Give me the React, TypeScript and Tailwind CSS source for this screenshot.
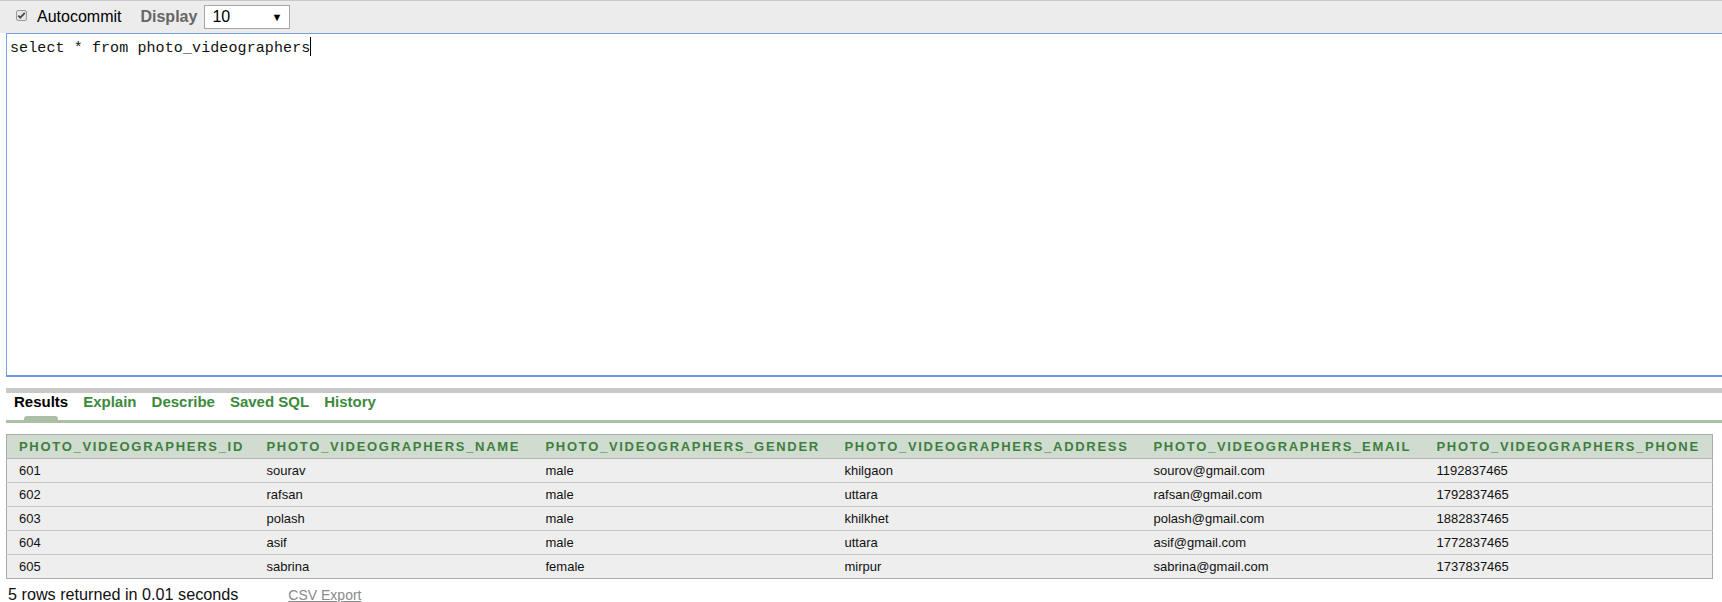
import React from "react";

const columns = [
    "PHOTO_VIDEOGRAPHERS_ID",
    "PHOTO_VIDEOGRAPHERS_NAME",
    "PHOTO_VIDEOGRAPHERS_GENDER",
    "PHOTO_VIDEOGRAPHERS_ADDRESS",
    "PHOTO_VIDEOGRAPHERS_EMAIL",
    "PHOTO_VIDEOGRAPHERS_PHONE",
];

const rows = [
    ["601", "sourav", "male", "khilgaon", "sourov@gmail.com", "1192837465"],
    ["602", "rafsan", "male", "uttara", "rafsan@gmail.com", "1792837465"],
    ["603", "polash", "male", "khilkhet", "polash@gmail.com", "1882837465"],
    ["604", "asif", "male", "uttara", "asif@gmail.com", "1772837465"],
    ["605", "sabrina", "female", "mirpur", "sabrina@gmail.com", "1737837465"],
];

const tabs = ["Results", "Explain", "Describe", "Saved SQL", "History"];

function App() {
    return (
        <div className="w-[1722px] h-[602px] overflow-hidden bg-white font-['Liberation_Sans',Arial,sans-serif] text-black">
            {/* Toolbar */}
            <div className="h-[33px] border-t border-[#c8c8c8] bg-[#ececec] flex items-center pl-[16px]">
                <svg width="11" height="11" viewBox="0 0 11 11" className="mb-[3px]">
                    <rect x="0.5" y="0.5" width="10" height="10" rx="1.5" fill="#e6e6e6" stroke="#9a9a9a" />
                    <path d="M2.3 5.6 L4.3 7.7 L8.8 2.8" fill="none" stroke="#4a4a4a" strokeWidth="1.8" />
                </svg>
                <span className="ml-[10px] text-[16px]">Autocommit</span>
                <span className="ml-[19px] text-[16px] font-bold text-[#666666]">Display</span>
                <div className="ml-[7px] w-[86px] h-[24px] border border-[#a6a6a6] bg-white flex items-center justify-between pl-[7px] pr-[7px]">
                    <span className="text-[16px]">10</span>
                    <span className="text-[11px] leading-none">▼</span>
                </div>
            </div>

            {/* Editor */}
            <div className="ml-[6px] mr-[-2px] h-[344px] border border-[#7aa0e0] border-b-2 border-b-[#6f98de] pl-[3px] pt-[3px] font-['Liberation_Mono',monospace] text-[15px] tracking-[0.1px] leading-[20px] text-[#111]">
                select * from photo_videographers
                <span className="inline-block w-px h-[19px] bg-black align-[-4px]" />
            </div>

            {/* Tabs */}
            <div className="ml-[6px] mt-[11px] h-[5px] bg-[#c9c9c9]" />
            <div className="ml-[6px] h-[27px] flex items-end pl-[8px] gap-[15px] text-[15px] font-bold">
                {tabs.map((t, i) => (
                    <div key={t} className="flex flex-col items-center">
                        <span className={i === 0 ? "text-black leading-[18px]" : "text-[#3b8a3b] leading-[18px]"}>{t}</span>
                        <div className={i === 0 ? "mt-[5px] w-[34px] h-[4px] rounded-t-[3px] bg-[#aabfa6]" : "mt-[5px] h-[4px]"} />
                    </div>
                ))}
            </div>
            <div className="ml-[6px] h-[3px] bg-[#aabfa6]" />

            {/* Results table */}
            <table className="ml-[6px] mt-[11px] w-[1707px] table-fixed border-collapse border border-[#aaaaaa] text-[13px]">
                <colgroup>
                    <col className="w-[248px]" />
                    <col className="w-[279px]" />
                    <col className="w-[299px]" />
                    <col className="w-[309px]" />
                    <col className="w-[283px]" />
                    <col />
                </colgroup>
                <thead>
                    <tr className="h-[24px] bg-[#d0dcd0] border-b border-[#b4b4b4]">
                        {columns.map((c) => (
                            <th key={c} className="text-left pl-[12px] font-bold text-[13px] tracking-[1.7px] text-[#3e7f3e] whitespace-nowrap">
                                {c}
                            </th>
                        ))}
                    </tr>
                </thead>
                <tbody>
                    {rows.map((r, i) => (
                        <tr
                            key={r[0]}
                            className={
                                i === rows.length - 1
                                    ? "h-[24px] bg-[#eeeeee] border-t border-white"
                                    : "h-[24px] bg-[#eeeeee] border-t border-white border-b border-b-[#c6c6c6]"
                            }
                        >
                            {r.map((v, j) => (
                                <td key={j} className="pl-[12px] text-[#111] whitespace-nowrap">
                                    {v}
                                </td>
                            ))}
                        </tr>
                    ))}
                </tbody>
            </table>

            {/* Footer */}
            <div className="flex items-baseline pl-[8px] pt-[3px]">
                <span className="text-[16.2px] text-[#111]">5 rows returned in 0.01 seconds</span>
                <a href="#" className="ml-[50px] text-[14px] text-[#8a8a8a] underline">CSV Export</a>
            </div>
        </div>
    );
}

export default App;
